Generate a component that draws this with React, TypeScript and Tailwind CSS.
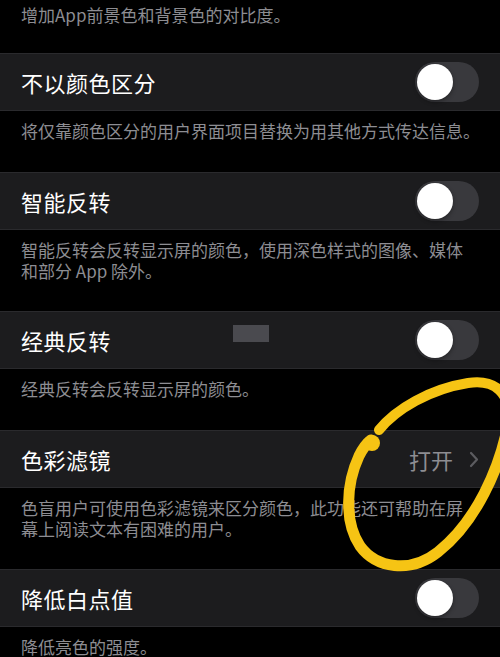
import React from 'react';

const font = { fontFamily: '"Noto Sans CJK SC", "Noto Sans", sans-serif' };

function Toggle() {
  return (
    <div className="relative h-[40px] w-[64px] rounded-full bg-[#39393d]">
      <div className="absolute left-[2px] top-[2px] h-[36px] w-[36px] rounded-full bg-white shadow-[0_2px_4px_rgba(0,0,0,0.35)]" />
    </div>
  );
}

function Row({ title, right, children }: { title: string; right?: React.ReactNode; children?: React.ReactNode }) {
  return (
    <div className="relative flex h-[58px] items-center justify-between border-y border-[#2a2a2d] bg-[#1c1c1e] pl-[21px] pr-[21px]">
      <span className="text-[22px] leading-none tracking-[0.5px] text-white">{title}</span>
      {right ?? <Toggle />}
      {children}
    </div>
  );
}

function Caption({ lines }: { lines: string[] }) {
  return (
    <div
      className={
        lines.length > 1
          ? 'px-[21px] pb-[30px] pt-[9px] text-[17px] leading-[21px] text-[#8d8d92]'
          : 'px-[21px] pb-[31px] pt-[9px] text-[17px] leading-[21px] text-[#8d8d92]'
      }
    >
      {lines.map((l) => (
        <div key={l} className="whitespace-nowrap">{l}</div>
      ))}
    </div>
  );
}

export default function App() {
  return (
    <div className="relative h-[657px] w-[500px] overflow-hidden bg-black" style={font}>
      <div className="px-[21px] pb-[28px] pt-[4px] text-[17px] leading-[21px] text-[#8d8d92]">
        增加App前景色和背景色的对比度。
      </div>

      <Row title="不以颜色区分" />
      <Caption lines={['将仅靠颜色区分的用户界面项目替换为用其他方式传达信息。']} />

      <Row title="智能反转" />
      <Caption lines={['智能反转会反转显示屏的颜色，使用深色样式的图像、媒体', '和部分 App 除外。']} />

      <Row title="经典反转">
        <div className="absolute left-[233px] top-[13px] h-[17px] w-[36px] bg-[#4a4a4f] blur-[0.5px]" />
      </Row>
      <Caption lines={['经典反转会反转显示屏的颜色。']} />

      <Row
        title="色彩滤镜"
        right={
          <div className="flex items-center gap-[16px] text-[22px] leading-none text-[#8d8d92]">
            <span>打开</span>
            <svg width="10" height="17" viewBox="0 0 10 17" fill="none">
              <path d="M2 2l6 6.5L2 15" stroke="#5c5c60" strokeWidth="2.2" strokeLinecap="round" strokeLinejoin="round" />
            </svg>
          </div>
        }
      />
      <Caption lines={['色盲用户可使用色彩滤镜来区分颜色，此功能还可帮助在屏', '幕上阅读文本有困难的用户。']} />

      <Row title="降低白点值" />
      <Caption lines={['降低亮色的强度。']} />

      <svg className="pointer-events-none absolute left-0 top-0" width="500" height="657" viewBox="0 0 500 657" fill="none">
        <path
          d="M379 430 C396 409 430 389 468 383 C494 379 512 392 508 424"
          stroke="#f6c414"
          strokeWidth="10"
          strokeLinecap="round"
        />
        <path
          d="M508 424 C500 468 476 522 438 552 C410 574 376 568 360 546 C344 522 346 484 359 456 C363 448 367 443 371 440"
          stroke="#f6c414"
          strokeWidth="11"
          strokeLinecap="round"
        />
        <circle cx="372" cy="443" r="8" fill="#f6c414" />
      </svg>
    </div>
  );
}
